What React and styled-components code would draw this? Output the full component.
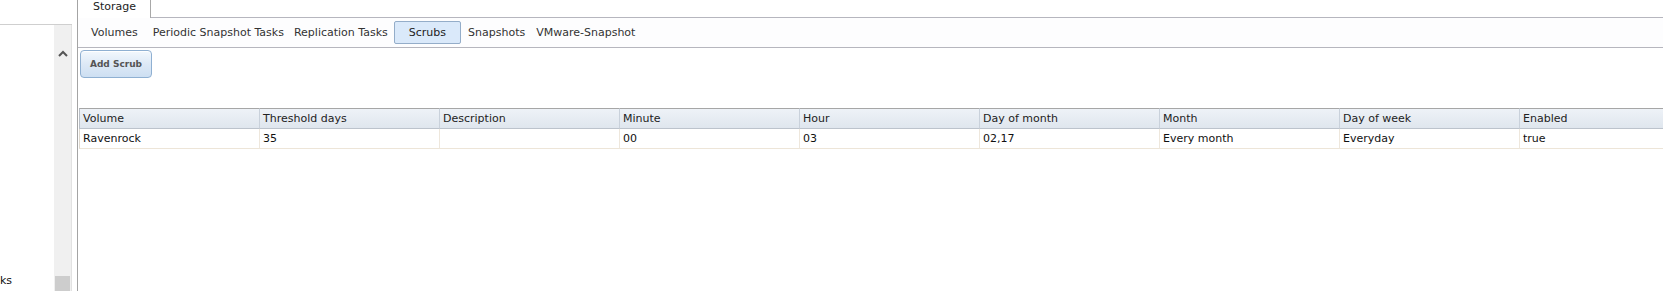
import styled, { createGlobalStyle } from "styled-components";

const GlobalStyle = createGlobalStyle`
  html, body {
    margin: 0;
    padding: 0;
    background: #fff;
  }
  body {
    font-family: "DejaVu Sans", Verdana, sans-serif;
    font-size: 11px;
    color: #222;
  }
`;

const Page = styled.div`
  display: flex;
  width: 1663px;
  height: 291px;
  overflow: hidden;
`;

const Sidebar = styled.div`
  width: 77px;
  flex: none;
  display: flex;
  flex-direction: column;
  border-right: 1px solid #a4a4a4;
`;

const SideHead = styled.div`
  height: 24px;
  width: 72px;
  border-bottom: 1px solid #cfcfcf;
`;

const SideBody = styled.div`
  flex: 1;
  display: flex;
  padding-right: 5px;
`;

const Tree = styled.div`
  width: 54px;
  display: flex;
  flex-direction: column;
  justify-content: flex-end;
  overflow: hidden;
  padding-bottom: 3px;
`;

const TreeItem = styled.div`
  white-space: nowrap;
  color: #111;
  line-height: 14px;
`;

const Scrollbar = styled.div`
  width: 17px;
  display: flex;
  flex-direction: column;
  background: #f0f0f0;
  border-right: 1px solid #e2e2e2;
`;

const ScrollArrow = styled.div`
  height: 32px;
  display: flex;
  align-items: flex-end;
  justify-content: center;
  padding-bottom: 1px;
`;

const ScrollThumb = styled.div`
  margin-top: auto;
  height: 15px;
  margin-left: 1px;
  margin-right: 1px;
  background: #cdcdcd;
`;

const Main = styled.div`
  flex: 1;
  min-width: 0;
  display: flex;
  flex-direction: column;
  overflow: hidden;
`;

const TabStrip = styled.div`
  height: 17px;
  display: flex;
  border-bottom: 1px solid #b6b6be;
`;

const TopTab = styled.div`
  width: 73px;
  height: 18px;
  margin-bottom: -1px;
  background: #fff;
  border-right: 1px solid #a8a8a8;
  padding-left: 15px;
  box-sizing: border-box;
  line-height: 13px;
  color: #222;
`;

const SubNav = styled.div`
  height: 29px;
  display: flex;
  align-items: center;
  padding-left: 8px;
  background: #fdfdfe;
  border-bottom: 1px solid #b6b6be;
`;

const NavItem = styled.div`
  padding: 0 4px;
  margin-right: ${(p) => p.$extra || 0}px;
  color: #333;
  white-space: nowrap;
  line-height: 21px;
  border: 1px solid transparent;
  border-radius: 2px;

  ${(p) =>
    p.$active &&
    `
    padding: 0 14px;
    margin: 0 2px 0 1px;
    background: #dae9fa;
    border-color: #94adc9;
    color: #222;
  `}
`;

const Toolbar = styled.div`
  height: 58px;
  padding: 2px 0 0 2px;
`;

const ActionButton = styled.button`
  width: 72px;
  height: 28px;
  padding: 0;
  font-family: "DejaVu Sans", Verdana, sans-serif;
  font-size: 9px;
  font-weight: bold;
  color: #545454;
  border: 1px solid #8fb0d2;
  border-radius: 4px;
  background: linear-gradient(#f3f8fd 0%, #dde9f6 50%, #cddff2 100%);
  box-shadow: inset 0 1px 0 #fff;
  cursor: pointer;
`;

const Table = styled.div`
  margin-left: 1px;
  display: grid;
  grid-template-columns: repeat(9, 180px);
`;

const HeadCell = styled.div`
  height: 19px;
  line-height: 19px;
  padding-left: 3px;
  border-top: 1px solid #a6a6a6;
  border-bottom: 1px solid #bcc3cc;
  border-left: 1px solid ${(p) => (p.$first ? "#b8bec6" : "#c9d1db")};
  background: linear-gradient(#eef2f7, #dfe6ee);
  color: #222;
  white-space: nowrap;
  overflow: hidden;
`;

const Cell = styled.div`
  height: 19px;
  line-height: 19px;
  padding-left: 3px;
  border-bottom: 1px solid #ede5d8;
  border-left: 1px solid ${(p) => (p.$first ? "#ded8ce" : "#eee7dc")};
  color: #111;
  white-space: nowrap;
  overflow: hidden;
`;

const columns = [
  "Volume",
  "Threshold days",
  "Description",
  "Minute",
  "Hour",
  "Day of month",
  "Month",
  "Day of week",
  "Enabled",
];

const rows = [
  ["Ravenrock", "35", "", "00", "03", "02,17", "Every month", "Everyday", "true"],
];

const navItems = [
  { label: "Volumes", extra: 5 },
  { label: "Periodic Snapshot Tasks" },
  { label: "Replication Tasks" },
  { label: "Scrubs", active: true },
  { label: "Snapshots", extra: 1 },
  { label: "VMware-Snapshot" },
];

export default function App() {
  return (
    <>
      <GlobalStyle />
      <Page>
        <Sidebar>
          <SideHead />
          <SideBody>
            <Tree>
              <TreeItem>ks</TreeItem>
            </Tree>
            <Scrollbar>
              <ScrollArrow>
                <svg width="10" height="7" viewBox="0 0 10 7">
                  <polyline
                    points="1,6 5,2 9,6"
                    fill="none"
                    stroke="#555"
                    strokeWidth="2"
                  />
                </svg>
              </ScrollArrow>
              <ScrollThumb />
            </Scrollbar>
          </SideBody>
        </Sidebar>
        <Main>
          <TabStrip>
            <TopTab>Storage</TopTab>
          </TabStrip>
          <SubNav>
            {navItems.map((n) => (
              <NavItem key={n.label} $active={n.active} $extra={n.extra}>
                {n.label}
              </NavItem>
            ))}
          </SubNav>
          <Toolbar>
            <ActionButton>Add Scrub</ActionButton>
          </Toolbar>
          <Table>
            {columns.map((c, i) => (
              <HeadCell key={c} $first={i === 0}>
                {c}
              </HeadCell>
            ))}
            {rows.map((r) =>
              r.map((v, i) => (
                <Cell key={i} $first={i === 0}>
                  {v}
                </Cell>
              ))
            )}
          </Table>
        </Main>
      </Page>
    </>
  );
}
